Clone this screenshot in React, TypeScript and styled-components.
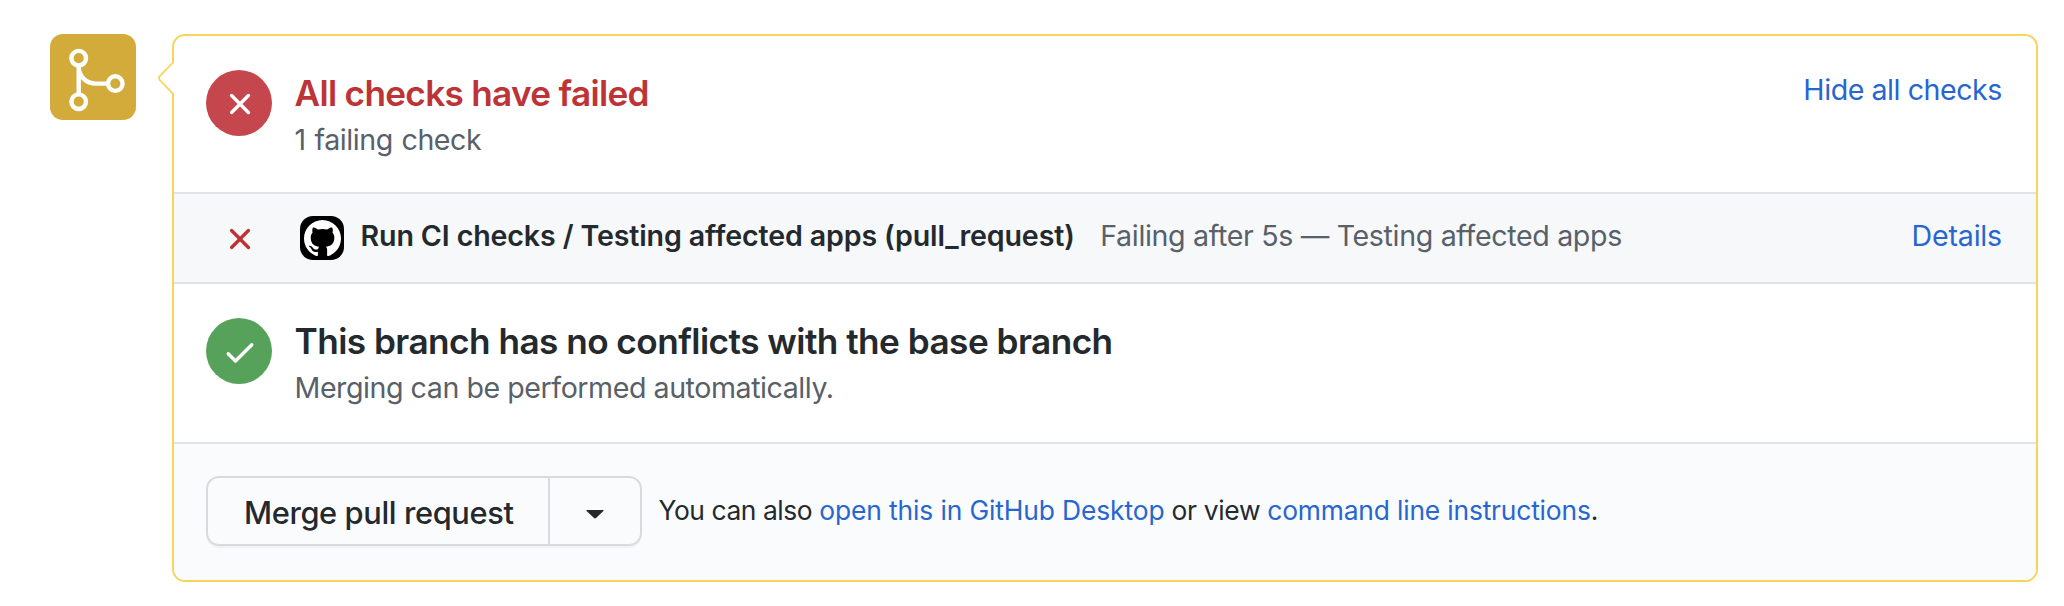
import React from "react";
import styled, { createGlobalStyle } from "styled-components";

const GlobalStyle = createGlobalStyle`
  *, *::before, *::after { box-sizing: border-box; }
  body {
    margin: 0;
    background: #fff;
    color: #24292e;
    font-family: Inter, "Liberation Sans", sans-serif;
    font-size: 28.6px;
  }
`;

const Page = styled.main`
  display: flex;
  align-items: flex-start;
  gap: 36px;
  min-height: 606px;
  padding: 34px 26px 0 50px;
`;

const MergeBadge = styled.div`
  flex: none;
  width: 86px;
  height: 86px;
  border-radius: 13px;
  background: #d3ab3a;

  svg { display: block; }
`;

const Card = styled.section`
  position: relative;
  flex: 1;
  min-width: 0;
  border: 2px solid #f9d45c;
  border-radius: 13px;
  background: #fff;
`;

const Pointer = styled.svg`
  position: absolute;
  left: -16px;
  top: 23px;
`;

const StatusSection = styled.div<{ $height: number }>`
  display: flex;
  align-items: flex-start;
  height: ${(p) => p.$height}px;
  padding: 34px 34px 0 32px;
`;

const StatusCircle = styled.div<{ $color: string }>`
  flex: none;
  display: flex;
  align-items: center;
  justify-content: center;
  width: 66px;
  height: 66px;
  margin-right: 22.5px;
  padding: 2px 0 0 2px;
  border-radius: 50%;
  background: ${(p) => p.$color};
`;

const StatusText = styled.div`
  flex: 1;
`;

const Title = styled.h3<{ $color?: string; $spacing: number }>`
  margin: 0;
  font-size: 35.2px;
  font-weight: 600;
  line-height: 46px;
  letter-spacing: ${(p) => p.$spacing}px;
  color: ${(p) => p.$color ?? "inherit"};
`;

const Subtitle = styled.p<{ $wordSpacing?: number }>`
  margin: 0;
  line-height: 47px;
  letter-spacing: -0.45px;
  word-spacing: ${(p) => p.$wordSpacing ?? 0}px;
  color: #586069;
`;

const Link = styled.a<{ $spacing: number }>`
  color: #2766cf;
  text-decoration: none;
  letter-spacing: ${(p) => p.$spacing}px;
`;

const ToggleLink = styled(Link)`
  line-height: 39px;
`;

const CheckRow = styled.div`
  display: flex;
  align-items: center;
  height: 92px;
  padding: 0 34px 0 48px;
  border-top: 2px solid #e1e3e7;
  border-bottom: 2px solid #e1e3e7;
  background: #f6f8fa;

  > svg { flex: none; margin-top: 2px; }
`;

const Avatar = styled.div`
  flex: none;
  display: flex;
  align-items: center;
  justify-content: center;
  width: 44px;
  height: 44px;
  margin: 0 16.5px 0 42px;
  border-radius: 13px;
  background: #000;
`;

const CheckLabel = styled.div`
  flex: 1;
  display: flex;
  padding-bottom: 5px;
`;

const CheckName = styled.strong`
  font-weight: 600;
  letter-spacing: -0.13px;
`;

const CheckResult = styled.span`
  margin-left: 25.5px;
  letter-spacing: -0.34px;
  color: #586069;
`;

const DetailsLink = styled(Link)`
  padding-bottom: 5px;
`;

const Footer = styled.div`
  display: flex;
  align-items: center;
  height: 138px;
  padding: 0 32px 2px;
  border-top: 2px solid #e1e3e7;
  border-radius: 0 0 11px 11px;
  background: #fafbfd;
`;

const ButtonGroup = styled.div`
  display: flex;
  height: 70px;
  margin-right: 16.5px;
  border: 2px solid #d8dadd;
  border-radius: 13px;
  box-shadow: 0 2px 0 rgba(27, 31, 35, 0.04);
`;

const MergeButton = styled.button`
  width: 342px;
  padding: 2px 0 0 36px;
  border: 0;
  border-right: 2px solid #d8dadd;
  background: none;
  color: #24292e;
  font: 500 30.8px Inter, "Liberation Sans", sans-serif;
  letter-spacing: -0.38px;
  text-align: left;
  white-space: nowrap;
`;

const CaretButton = styled.button`
  display: flex;
  align-items: center;
  justify-content: center;
  width: 90px;
  padding: 6px 0 0;
  border: 0;
  background: none;
`;

const FooterText = styled.p`
  margin: 0;
  padding-bottom: 2px;
  font-size: 26.4px;
  white-space: pre;
`;

const Segment = styled.span<{ $spacing: number }>`
  letter-spacing: ${(p) => p.$spacing}px;
`;

const XIcon = ({ color }: { color: string }) => (
  <svg width="36" height="36" viewBox="0 0 16 16" fill={color} aria-hidden="true">
    <path d="M3.72 3.72a.75.75 0 011.06 0L8 6.94l3.22-3.22a.75.75 0 111.06 1.06L9.06 8l3.22 3.22a.75.75 0 11-1.06 1.06L8 9.06l-3.22 3.22a.75.75 0 01-1.06-1.06L6.94 8 3.72 4.78a.75.75 0 010-1.06z" />
  </svg>
);

const CheckIcon = () => (
  <svg width="36" height="36" viewBox="0 0 16 16" fill="#fff" aria-hidden="true">
    <path d="M13.78 4.22a.75.75 0 010 1.06l-7.25 7.25a.75.75 0 01-1.06 0L2.22 9.28a.75.75 0 011.06-1.06L6 10.94l6.72-6.72a.75.75 0 011.06 0z" />
  </svg>
);

const GitMergeIcon = () => (
  <svg width="86" height="86" viewBox="0 0 86 86" fill="none" stroke="#fff" strokeWidth="4.4" aria-hidden="true">
    <circle cx="28.7" cy="24.2" r="7.3" />
    <circle cx="28.7" cy="67.7" r="7.3" />
    <circle cx="65.3" cy="49.6" r="7.3" />
    <path d="M28.7 31.5V60.4M28.7 32.5C28.7 42 36 49.6 46 49.6H58" />
  </svg>
);

const GitHubMark = () => (
  <svg width="37" height="37" viewBox="0 0 16 16" fill="#fff" aria-hidden="true">
    <path d="M8 0C3.58 0 0 3.58 0 8c0 3.54 2.29 6.53 5.47 7.59.4.07.55-.17.55-.38 0-.19-.01-.82-.01-1.49-2.01.37-2.53-.49-2.69-.94-.09-.23-.48-.94-.82-1.13-.28-.15-.68-.52-.01-.53.63-.01 1.08.58 1.23.82.72 1.21 1.87.87 2.33.66.07-.52.28-.87.51-1.07-1.78-.2-3.64-.89-3.64-3.95 0-.87.31-1.59.82-2.15-.08-.2-.36-1.02.08-2.12 0 0 .67-.21 2.2.82.64-.18 1.32-.27 2-.27s1.36.09 2 .27c1.53-1.04 2.2-.82 2.2-.82.44 1.1.16 1.92.08 2.12.51.56.82 1.27.82 2.15 0 3.07-1.87 3.75-3.65 3.95.29.25.54.73.54 1.48 0 1.07-.01 1.93-.01 2.2 0 .21.15.46.55.38A8.01 8.01 0 0016 8c0-4.42-3.58-8-8-8z" />
  </svg>
);

export default function App() {
  return (
    <>
      <GlobalStyle />
      <Page>
        <MergeBadge>
          <GitMergeIcon />
        </MergeBadge>
        <Card>
          <Pointer width="18" height="38" viewBox="0 0 18 38" aria-hidden="true">
            <path d="M18 2.5L16 3.2L1 17.8V20.2L16 35.3L18 36Z" fill="#fff" />
            <path d="M15.5 3.2L1.2 17.5V20.5L15.5 35.3" fill="none" stroke="#f9d45c" strokeWidth="1.8" />
          </Pointer>
          <StatusSection $height={156}>
            <StatusCircle $color="#c5474d">
              <XIcon color="#fff" />
            </StatusCircle>
            <StatusText>
              <Title $color="#bd3437" $spacing={-0.7}>All checks have failed</Title>
              <Subtitle $wordSpacing={1.2}>1 failing check</Subtitle>
            </StatusText>
            <ToggleLink $spacing={-0.45}>Hide all checks</ToggleLink>
          </StatusSection>
          <CheckRow>
            <XIcon color="#bd3437" />
            <Avatar>
              <GitHubMark />
            </Avatar>
            <CheckLabel>
              <CheckName>Run CI checks / Testing affected apps (pull_request)</CheckName>
              <CheckResult>Failing after 5s — Testing affected apps</CheckResult>
            </CheckLabel>
            <DetailsLink $spacing={-0.2}>Details</DetailsLink>
          </CheckRow>
          <StatusSection $height={158}>
            <StatusCircle $color="#57a25a">
              <CheckIcon />
            </StatusCircle>
            <StatusText>
              <Title $spacing={-0.545}>This branch has no conflicts with the base branch</Title>
              <Subtitle>Merging can be performed automatically.</Subtitle>
            </StatusText>
          </StatusSection>
          <Footer>
            <ButtonGroup>
              <MergeButton>Merge pull request</MergeButton>
              <CaretButton aria-label="Select merge method">
                <svg width="18" height="9" viewBox="0 0 18 9" fill="#24292e" aria-hidden="true">
                  <path d="M0.8 0H17.2Q18 .2 17.4 .9L10 8Q9 8.8 8 8L.6 .9Q0 .2 .8 0Z" />
                </svg>
              </CaretButton>
            </ButtonGroup>
            <FooterText>
              <Segment $spacing={-0.43}>{"You can also "}</Segment>
              <Link $spacing={-0.12}>open this in GitHub Desktop</Link>
              <Segment $spacing={-0.33}>{" or view "}</Segment>
              <Link $spacing={-0.18}>command line instructions</Link>.
            </FooterText>
          </Footer>
        </Card>
      </Page>
    </>
  );
}
